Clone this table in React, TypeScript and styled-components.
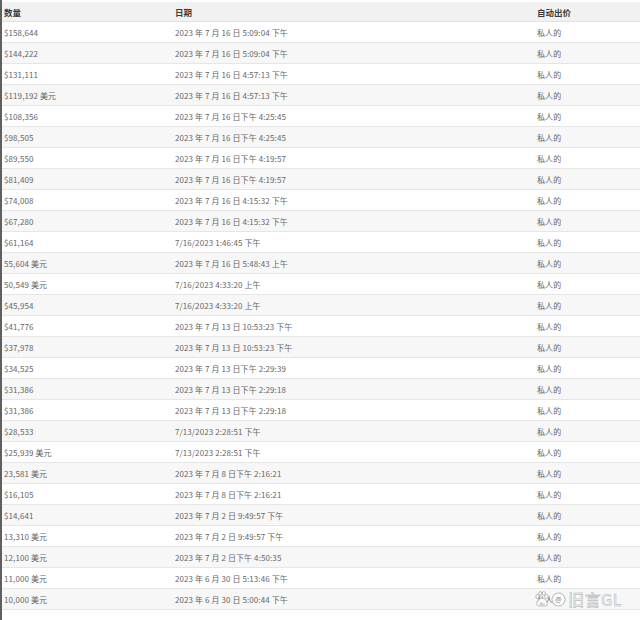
import React from "react";
import styled, { createGlobalStyle } from "styled-components";

const GlobalStyle = createGlobalStyle`
  html, body {
    margin: 0;
    padding: 0;
    background: #ffffff;
  }
  body {
    font-family: "Noto Sans CJK SC", "Noto Sans", sans-serif;
  }
`;

const Page = styled.div`
  position: relative;
  width: 640px;
  height: 620px;
  box-sizing: border-box;
  border-left: 2px solid #606060;
  padding-top: 2px;
  background: #ffffff;
  overflow: hidden;
`;

const Grid = styled.div`
  display: grid;
  grid-template-columns: 171px 362px 1fr;
`;

const HeaderCell = styled.div`
  height: 20px;
  display: flex;
  align-items: center;
  padding-left: 2px;
  background: #f1f1f1;
  border-bottom: 1px solid #e2e2e2;
  box-sizing: border-box;
  font-size: 8.5px;
  font-weight: 700;
  color: #3c3c3c;
  white-space: nowrap;
`;

const Cell = styled.div<{ $alt: boolean }>`
  height: 21px;
  display: flex;
  align-items: center;
  padding-left: 2px;
  box-sizing: border-box;
  border-bottom: 1px solid #e6e6e6;
  background: ${(p) => (p.$alt ? "#f7f7f7" : "#ffffff")};
  font-size: 8px;
  letter-spacing: 0.1px;
  color: #666666;
  white-space: nowrap;
`;

const Watermark = styled.div`
  position: absolute;
  right: 18px;
  bottom: 13px;
  display: flex;
  align-items: center;
  gap: 2px;
`;

const MarkText = styled.span`
  font-family: "Noto Sans CJK SC", "Noto Sans", sans-serif;
  font-size: 16px;
  font-weight: 400;
  line-height: 1;
  color: rgba(255, 255, 255, 0.9);
  -webkit-text-stroke: 0.5px #a8a8a8;
  letter-spacing: 0.5px;
`;

const rows: [string, string][] = [
  ["$158,644", "2023 年 7 月 16 日 5:09:04 下午"],
  ["$144,222", "2023 年 7 月 16 日 5:09:04 下午"],
  ["$131,111", "2023 年 7 月 16 日 4:57:13 下午"],
  ["$119,192 美元", "2023 年 7 月 16 日 4:57:13 下午"],
  ["$108,356", "2023 年 7 月 16 日下午 4:25:45"],
  ["$98,505", "2023 年 7 月 16 日下午 4:25:45"],
  ["$89,550", "2023 年 7 月 16 日下午 4:19:57"],
  ["$81,409", "2023 年 7 月 16 日下午 4:19:57"],
  ["$74,008", "2023 年 7 月 16 日 4:15:32 下午"],
  ["$67,280", "2023 年 7 月 16 日 4:15:32 下午"],
  ["$61,164", "7/16/2023 1:46:45 下午"],
  ["55,604 美元", "2023 年 7 月 16 日 5:48:43 上午"],
  ["50,549 美元", "7/16/2023 4:33:20 上午"],
  ["$45,954", "7/16/2023 4:33:20 上午"],
  ["$41,776", "2023 年 7 月 13 日 10:53:23 下午"],
  ["$37,978", "2023 年 7 月 13 日 10:53:23 下午"],
  ["$34,525", "2023 年 7 月 13 日下午 2:29:39"],
  ["$31,386", "2023 年 7 月 13 日下午 2:29:18"],
  ["$31,386", "2023 年 7 月 13 日下午 2:29:18"],
  ["$28,533", "7/13/2023 2:28:51 下午"],
  ["$25,939 美元", "7/13/2023 2:28:51 下午"],
  ["23,581 美元", "2023 年 7 月 8 日下午 2:16:21"],
  ["$16,105", "2023 年 7 月 8 日下午 2:16:21"],
  ["$14,641", "2023 年 7 月 2 日 9:49:57 下午"],
  ["13,310 美元", "2023 年 7 月 2 日 9:49:57 下午"],
  ["12,100 美元", "2023 年 7 月 2 日下午 4:50:35"],
  ["11,000 美元", "2023 年 6 月 30 日 5:13:46 下午"],
  ["10,000 美元", "2023 年 6 月 30 日 5:00:44 下午"],
];

const PawIcon = () => (
  <svg width="14" height="16" viewBox="0 0 28 32" fill="none">
    <g stroke="#a0a0a0" strokeWidth="1.5" fill="rgba(255,255,255,0.9)">
      <ellipse cx="5" cy="11" rx="3.3" ry="4.3" />
      <ellipse cx="10.5" cy="4.8" rx="3" ry="3.8" />
      <ellipse cx="17.5" cy="4.8" rx="3" ry="3.8" />
      <ellipse cx="23" cy="11" rx="3.3" ry="4.3" />
      <path d="M14 14 C8.5 14 3.5 20.5 3.5 25.5 C3.5 30.5 8.5 30.5 14 29.5 C19.5 30.5 24.5 30.5 24.5 25.5 C24.5 20.5 19.5 14 14 14 Z" />
    </g>
    <text x="14" y="27" textAnchor="middle" fontSize="8" fontFamily="Noto Sans, sans-serif" fill="#8c8c8c">du</text>
  </svg>
);

const AtIcon = () => (
  <svg width="15" height="15" viewBox="0 0 30 30" fill="none">
    <circle cx="15" cy="15" r="13" stroke="#a0a0a0" strokeWidth="1.5" fill="rgba(255,255,255,0.9)" />
    <text x="15" y="20" textAnchor="middle" fontSize="14" fontFamily="Noto Sans, sans-serif" fill="#8c8c8c">@</text>
  </svg>
);

export default function App() {
  return (
    <>
      <GlobalStyle />
      <Page>
        <Grid>
          <HeaderCell>数量</HeaderCell>
          <HeaderCell>日期</HeaderCell>
          <HeaderCell>自动出价</HeaderCell>
          {rows.map(([amount, date], i) => {
            const alt = i % 2 === 1;
            return (
              <React.Fragment key={i}>
                <Cell $alt={alt}>{amount}</Cell>
                <Cell $alt={alt}>{date}</Cell>
                <Cell $alt={alt}>私人的</Cell>
              </React.Fragment>
            );
          })}
        </Grid>
        <Watermark>
          <PawIcon />
          <AtIcon />
          <MarkText>旧言GL</MarkText>
        </Watermark>
      </Page>
    </>
  );
}
